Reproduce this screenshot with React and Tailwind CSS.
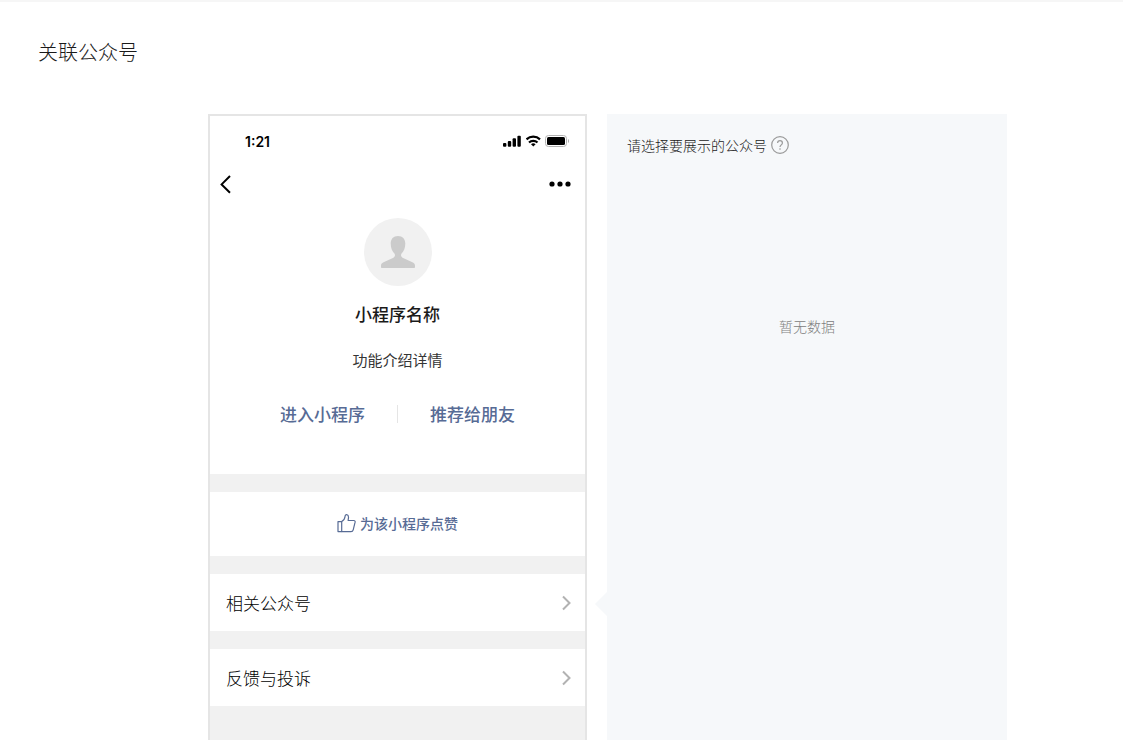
const menuItems = ['相关公众号', '反馈与投诉'];

function StatusIcons() {
  return (
    <div className="flex items-center gap-1 pb-0.5">
      <svg width="19" height="12" viewBox="0 0 19 12" fill="#000" aria-hidden="true">
        <rect x="0" y="8" width="3.4" height="3.8" rx="1" />
        <rect x="4.800" y="6" width="3.400" height="5.800" rx="1" />
        <rect x="9.600" y="3.200" width="3.400" height="8.600" rx="1" />
        <rect x="14.400" y="0.700" width="3.400" height="11.100" rx="1" />
      </svg>
      <svg width="15" height="12" viewBox="0 0 15 12" fill="none" stroke="#000" strokeWidth="2.2" aria-hidden="true">
        <path d="M0.500 4.400a9.800 9.800 0 0 1 13.500 0" />
        <path d="M3 7.500a6.200 6.200 0 0 1 8.500 0" />
        <path d="M5 9.300a3.400 3.400 0 0 1 4.600 0L7.300 11.600z" fill="#000" stroke="none" />
      </svg>
      <svg width="25" height="12" viewBox="0 0 25 12" aria-hidden="true">
        <rect x="0.5" y="0.5" width="21" height="11" rx="3" fill="none" stroke="#b2b2b2" />
        <rect x="2" y="2" width="18" height="8" rx="1.5" fill="#000" />
        <path d="M23 4v4c1.3-.6 1.3-3.400 0-4z" fill="#a6a6a6" />
      </svg>
    </div>
  );
}

function Phone() {
  return (
    <div className="flex w-[379px] shrink-0 flex-col border-2 border-b-0 border-[#e5e5e5] bg-[#f1f1f1]">
      <div className="flex flex-col bg-white pb-12">
        <div className="flex h-13 items-center justify-between pr-[15px] pl-[35px]">
          <span className="font-['Inter'] text-sm font-semibold text-black">1:21</span>
          <StatusIcons />
        </div>
        <div className="flex h-8 items-center justify-between pr-[13px] pl-[10px]">
          <button type="button" aria-label="返回">
            <svg width="12" height="20" viewBox="0 0 12 20" fill="none" stroke="#000" strokeWidth="2">
              <path d="M10 2 1.600 10.400l8.400 8.400" />
            </svg>
          </button>
          <button type="button" aria-label="更多">
            <svg width="23" height="6" viewBox="0 0 23 6" fill="#000">
              <circle cx="3" cy="3" r="2.600" />
              <circle cx="11" cy="3" r="2.600" />
              <circle cx="19" cy="3" r="2.600" />
            </svg>
          </button>
        </div>

        <div className="mt-[18px] flex flex-col items-center">
          <div className="flex size-[68px] items-center justify-center rounded-full bg-[#f1f1f1]">
            <svg width="34" height="34" viewBox="0 0 34 34" fill="#cbcbcb" aria-hidden="true">
              <path d="M17 1c4.600 0 7.300 3 7.300 7.500 0 4.500-1.500 8-3.900 10.200-.9 1.800-.1 3.300 1.700 4.300l8.800 4.100c2.200 1 3.100 2 3.100 3.700V32c0 .6-.4 1-1 1H1c-.6 0-1-.4-1-1v-1.200c0-1.700.9-2.700 3.100-3.700l8.800-4.100c1.800-1 2.600-2.500 1.700-4.300C11.200 16.500 9.700 13 9.700 8.500 9.700 4 12.400 1 17 1z" />
            </svg>
          </div>
          <h2 className="mt-4 text-[17px] leading-6 font-medium text-[#1a1a1a]">小程序名称</h2>
          <p className="mt-6 text-[15px] leading-5 text-[#353535]">功能介绍详情</p>
          <div className="mt-8 flex items-center gap-8">
            <button type="button" className="text-[17px] leading-6 font-medium text-[#576b95]">进入小程序</button>
            <span className="h-[18px] w-px bg-[#e5e5e5]" />
            <button type="button" className="text-[17px] leading-6 font-medium text-[#576b95]">推荐给朋友</button>
          </div>
        </div>
      </div>

      <button type="button" className="mt-[18px] flex h-16 items-center justify-center gap-1 bg-white pb-0.5 text-[#576b95]">
        <svg width="19" height="19" viewBox="0 0 19 19" fill="none" stroke="currentColor" strokeWidth="1.200" strokeLinejoin="round" aria-hidden="true">
          <path d="M1 7.600h3.700v10H1z" />
          <path d="M4.700 7.600C7 6.300 7.900 4.400 8.100 2.200 8.200 1 8.900.6 9.700.7c1.400.2 1.900 1.400 1.800 2.900l-.4 2.900h5.700c1 0 1.500.8 1.300 1.700l-1.900 7.600c-.3 1.200-1 1.800-2.200 1.800H4.700" />
        </svg>
        <span className="text-sm font-medium">为该小程序点赞</span>
      </button>

      {menuItems.map((label) => (
        <button
          key={label}
          type="button"
          className="mt-[18px] flex h-[57px] items-center justify-between bg-white pr-[14px] pl-4 text-left"
        >
          <span className="text-[17px] leading-6 font-light text-black">{label}</span>
          <svg width="9" height="16" viewBox="0 0 9 16" fill="none" stroke="#b2b2b2" strokeWidth="2" aria-hidden="true">
            <path d="M1 1.500 7.500 8 1 14.500" />
          </svg>
        </button>
      ))}
    </div>
  );
}

function AccountPanel() {
  return (
    <section className="relative w-[400px] shrink-0 bg-[#f6f8fa] p-5">
      {/* pointer towards the related accounts row */}
      <span className="absolute top-[478px] -left-3 border-y-[12px] border-r-[12px] border-y-transparent border-r-[#f6f8fa]" />
      <div className="flex items-center gap-1">
        <h2 className="text-sm font-light text-[#1a1a1a]">请选择要展示的公众号</h2>
        <button type="button" aria-label="帮助">
          <svg width="18" height="22" viewBox="0 -2 18 22" fill="none" stroke="#9a9a9a" aria-hidden="true">
            <circle cx="9" cy="9" r="8.300" strokeWidth="1.200" />
            <path d="M6.600 7.100C6.600 5.600 7.600 4.700 9 4.700s2.400.9 2.400 2.200c0 1.900-2.400 2-2.400 4.100" strokeWidth="1.200" />
            <circle cx="9" cy="13" r="0.800" fill="#9a9a9a" stroke="none" />
          </svg>
        </button>
      </div>
      <p className="mt-40 text-center text-sm font-light text-[#808080]">暂无数据</p>
    </section>
  );
}

export default function App() {
  return (
    <main className="flex min-h-screen flex-col border-t-2 border-[#f6f6f6] bg-white font-['Noto_Sans_CJK_SC',sans-serif]">
      <h1 className="px-[38px] pt-9 text-xl leading-7 font-light text-[#1a1a1a]">关联公众号</h1>
      <div className="mt-12 ml-52 flex flex-1 gap-5">
        <Phone />
        <AccountPanel />
      </div>
    </main>
  );
}
